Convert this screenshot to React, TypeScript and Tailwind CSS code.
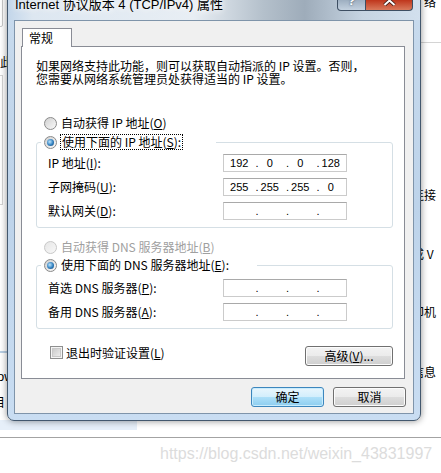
import React from "react";

function Radio({ checked = false, disabled = false }: { checked?: boolean; disabled?: boolean }) {
  return (
    <span
      className={
        disabled
          ? "flex h-[13px] w-[13px] shrink-0 items-center justify-center rounded-full border border-[#c8c8c8] bg-[linear-gradient(135deg,#e6e6e6,#f8f8f8)]"
          : "flex h-[13px] w-[13px] shrink-0 items-center justify-center rounded-full border border-[#8a8a8a] bg-[linear-gradient(135deg,#d0d0d0,#fafafa)]"
      }
    >
      {checked && (
        <span className="h-[7px] w-[7px] rounded-full bg-[radial-gradient(circle_at_40%_40%,#bfe6fd,#2f7fbf_55%,#173f66)]" />
      )}
    </span>
  );
}

function IpField({ parts }: { parts?: string[] }) {
  const p = parts ?? ["", "", "", ""];
  return (
    <div className="grid h-[18px] w-[124px] grid-cols-4 border border-[#cbcbcb] border-t-[#a9a9a9] bg-white font-['Liberation_Sans',sans-serif] text-[11px] leading-[16px] text-black">
      {p.map((v, i) => (
        <div key={i} className="relative text-center">
          {i > 0 && <span className="absolute left-[1px] top-0">.</span>}
          {v}
        </div>
      ))}
    </div>
  );
}

function Btn({ children, primary = false, w }: { children: React.ReactNode; primary?: boolean; w: string }) {
  return (
    <div
      className={
        (primary
          ? "border-[#3c86bd] bg-[linear-gradient(#e9f6fd,#d2eefc_50%,#aee0f9_50%,#8dcdef)] shadow-[inset_0_0_0_1px_#c9ecfd] "
          : "border-[#707070] bg-[linear-gradient(#f3f3f3,#ebebeb_50%,#dddddd_50%,#cfcfcf)] shadow-[inset_0_0_0_1px_#fcfcfc] ") +
        w +
        " flex h-[20px] items-center justify-center rounded-[3px] border text-[12px] leading-[14px]"
      }
    >
      {children}
    </div>
  );
}

export default function App() {
  return (
    <div className="relative h-[473px] w-[441px] overflow-hidden bg-white font-['Noto_Sans_CJK_SC',sans-serif] text-[12px] text-black">
      {/* page behind the dialog */}
      <div className="absolute left-[-10px] top-[-4px] h-[31px] w-[13px] rounded-[2px] border border-[#c9c9c9]" />
      <div className="absolute left-[0px] top-[55px] leading-[14px]">此</div>
      <div className="absolute left-[-10px] top-[75px] h-[130px] w-[13px] border border-[#d4d4d4]" />
      <div className="absolute left-0 top-[351px] h-[2px] w-[8px] bg-[#b9cfe4]" />
      <div className="absolute left-[-3px] top-[370px] font-['Liberation_Sans',sans-serif] text-[13px] leading-[14px]">ow</div>
      <div className="absolute left-[-7px] top-[395px] leading-[14px]">目</div>
      <div className="absolute left-0 top-[420px] h-[10px] w-[137px] bg-[#e6eff9]" />
      <div className="absolute left-[424px] top-[-5px] leading-[14px]">络</div>
      <div className="absolute left-[420px] top-[42px] h-px w-[21px] bg-[#d4d4d4]" />
      <div className="absolute left-[412px] top-[188px] leading-[14px]">连接</div>
      <div className="absolute left-[412px] top-[247px] leading-[14px]">成 V</div>
      <div className="absolute left-[412px] top-[305px] leading-[14px]">印机</div>
      <div className="absolute left-[412px] top-[365px] leading-[14px]">信息</div>
      <div className="absolute left-0 top-[437px] h-px w-full bg-[#a3a3a3]" />
      <div className="absolute left-[160px] top-[445px] font-['Liberation_Sans',sans-serif] text-[16px] leading-[18px] text-[#dcdcdc]">
        https://blog.csdn.net/weixin_43831997
      </div>

      {/* dialog window */}
      <div className="absolute left-[7px] top-[-10px] flex h-[431px] w-[414px] flex-col rounded-[7px] border border-[#43586e] bg-[linear-gradient(180deg,#c9dbed,#bdd3ea_50%,#c9ddf2)] shadow-[0_0_7px_rgba(0,0,0,0.45)]">
        {/* title bar */}
        <div className="flex h-[29px] shrink-0 items-start justify-between rounded-t-[6px] bg-[linear-gradient(90deg,#c3d6ea_0%,#dde7f1_6%,#e8eef4_45%,#b4c0cb_62%,#9eacba_72%,#c6d4e2_86%,#d2e0ee)]">
          <div className="ml-[7px] pt-[6px] font-['Liberation_Sans','Noto_Sans_CJK_SC',sans-serif] text-[13px] leading-[16px] text-black [text-shadow:0_0_6px_#fff,0_0_10px_#fff]">
            Internet 协议版本 4 (TCP/IPv4) 属性
          </div>
          <div className="mr-[7px] flex">
            <div className="flex h-[20px] w-[29px] items-center justify-center rounded-bl-[4px] border border-t-0 border-[#3d4e62] bg-[linear-gradient(#c9d4df,#aebdcc_50%,#9fb0c2_50%,#c3d1df)] font-['Liberation_Sans',sans-serif] text-[13px] font-bold leading-[14px] text-white [text-shadow:0_0_2px_#2c3e52]">
              ?
            </div>
            <div className="flex h-[20px] w-[47px] items-center justify-center rounded-br-[4px] border border-l-0 border-t-0 border-[#3d4e62] bg-[linear-gradient(#e3a393,#cf6550_45%,#c0391f_50%,#d97a5c)]">
              <svg width="13" height="11" viewBox="0 0 13 11">
                <path d="M1.5 1 L11.5 10 M11.5 1 L1.5 10" stroke="#3a1a14" strokeWidth="3.6" />
                <path d="M1.5 1 L11.5 10 M11.5 1 L1.5 10" stroke="#ffffff" strokeWidth="2" />
              </svg>
            </div>
          </div>
        </div>

        {/* client area */}
        <div className="mx-[6px] flex h-[394px] shrink-0 flex-col border border-[#7f94aa] bg-[#f0f0f0] pl-[6px] pt-[7px]">
          {/* tab */}
          <div className="relative z-10 -mb-px ml-px flex h-[19px] w-[50px] items-center border border-b-0 border-[#898c95] bg-white pl-[6px] leading-[14px]">
            常规
          </div>
          {/* tab panel */}
          <div className="flex h-[333px] w-[384px] flex-col border border-[#898c95] bg-white pl-[14px]">
            <div className="mt-[12px] whitespace-nowrap leading-[13px]">
              如果网络支持此功能，则可以获取自动指派的 IP 设置。否则，
              <br />
              您需要从网络系统管理员处获得适当的 IP 设置。
            </div>

            <div className="ml-[8px] mt-[30px] flex h-[16px] items-center gap-[4px] whitespace-nowrap leading-[14px]">
              <Radio />
              <span>
                自动获得 IP 地址(<u>O</u>)
              </span>
            </div>

            <div className="mt-[11px] flex w-[357px] flex-col rounded-[3px] border border-[#d5dfe5] pb-[7px] pl-[11px]">
              <div className="-mt-[9px] ml-[-7px] flex h-[16px] w-[175px] items-center gap-[3px] bg-white pl-[3px] leading-[14px]">
                <Radio checked />
                <span className="whitespace-nowrap border border-dotted border-black px-px">
                  使用下面的 IP 地址(<u>S</u>):
                </span>
              </div>
              <div className="mt-[4px] flex flex-col gap-[6px]">
                <div className="flex h-[18px] items-center">
                  <span className="w-[175px] leading-[14px]">
                    IP 地址(<u>I</u>):
                  </span>
                  <IpField parts={["192", "0", "0", "128"]} />
                </div>
                <div className="flex h-[18px] items-center">
                  <span className="w-[175px] leading-[14px]">
                    子网掩码(<u>U</u>):
                  </span>
                  <IpField parts={["255", "255", "255", "0"]} />
                </div>
                <div className="flex h-[18px] items-center">
                  <span className="w-[175px] leading-[14px]">
                    默认网关(<u>D</u>):
                  </span>
                  <IpField />
                </div>
              </div>
            </div>

            <div className="ml-[8px] mt-[11px] flex h-[16px] items-center gap-[4px] whitespace-nowrap leading-[14px] text-[#a0a0a0]">
              <Radio disabled />
              <span>
                自动获得 DNS 服务器地址(<u>B</u>)
              </span>
            </div>

            <div className="mt-[10px] flex w-[357px] flex-col rounded-[3px] border border-[#d5dfe5] pb-[7px] pl-[11px]">
              <div className="-mt-[9px] ml-[-7px] flex h-[16px] w-[216px] items-center gap-[4px] bg-white pl-[3px] leading-[14px]">
                <Radio checked />
                <span className="whitespace-nowrap">
                  使用下面的 DNS 服务器地址(<u>E</u>):
                </span>
              </div>
              <div className="mt-[6px] flex flex-col gap-[6px]">
                <div className="flex h-[18px] items-center">
                  <span className="w-[175px] leading-[14px]">
                    首选 DNS 服务器(<u>P</u>):
                  </span>
                  <IpField />
                </div>
                <div className="flex h-[18px] items-center">
                  <span className="w-[175px] leading-[14px]">
                    备用 DNS 服务器(<u>A</u>):
                  </span>
                  <IpField />
                </div>
              </div>
            </div>

            <div className="mt-[17px] flex w-[357px] items-start justify-between">
              <div className="ml-[14px] flex h-[13px] items-center gap-[3px] whitespace-nowrap leading-[14px]">
                <span className="flex h-[13px] w-[13px] items-center justify-center border border-[#8e8f8f] bg-[#f4f4f4]">
                  <span className="h-[9px] w-[9px] border border-[#c9c9c9] bg-[linear-gradient(135deg,#cbcbcb,#ececec)]" />
                </span>
                <span>
                  退出时验证设置(<u>L</u>)
                </span>
              </div>
              <Btn w="w-[88px]">
                高级(<u>V</u>)...
              </Btn>
            </div>
          </div>

          {/* bottom buttons */}
          <div className="mt-[8px] flex justify-end gap-[9px] pr-[7px]">
            <Btn primary w="w-[73px]">
              确定
            </Btn>
            <Btn w="w-[73px]">取消</Btn>
          </div>
        </div>
      </div>
    </div>
  );
}
